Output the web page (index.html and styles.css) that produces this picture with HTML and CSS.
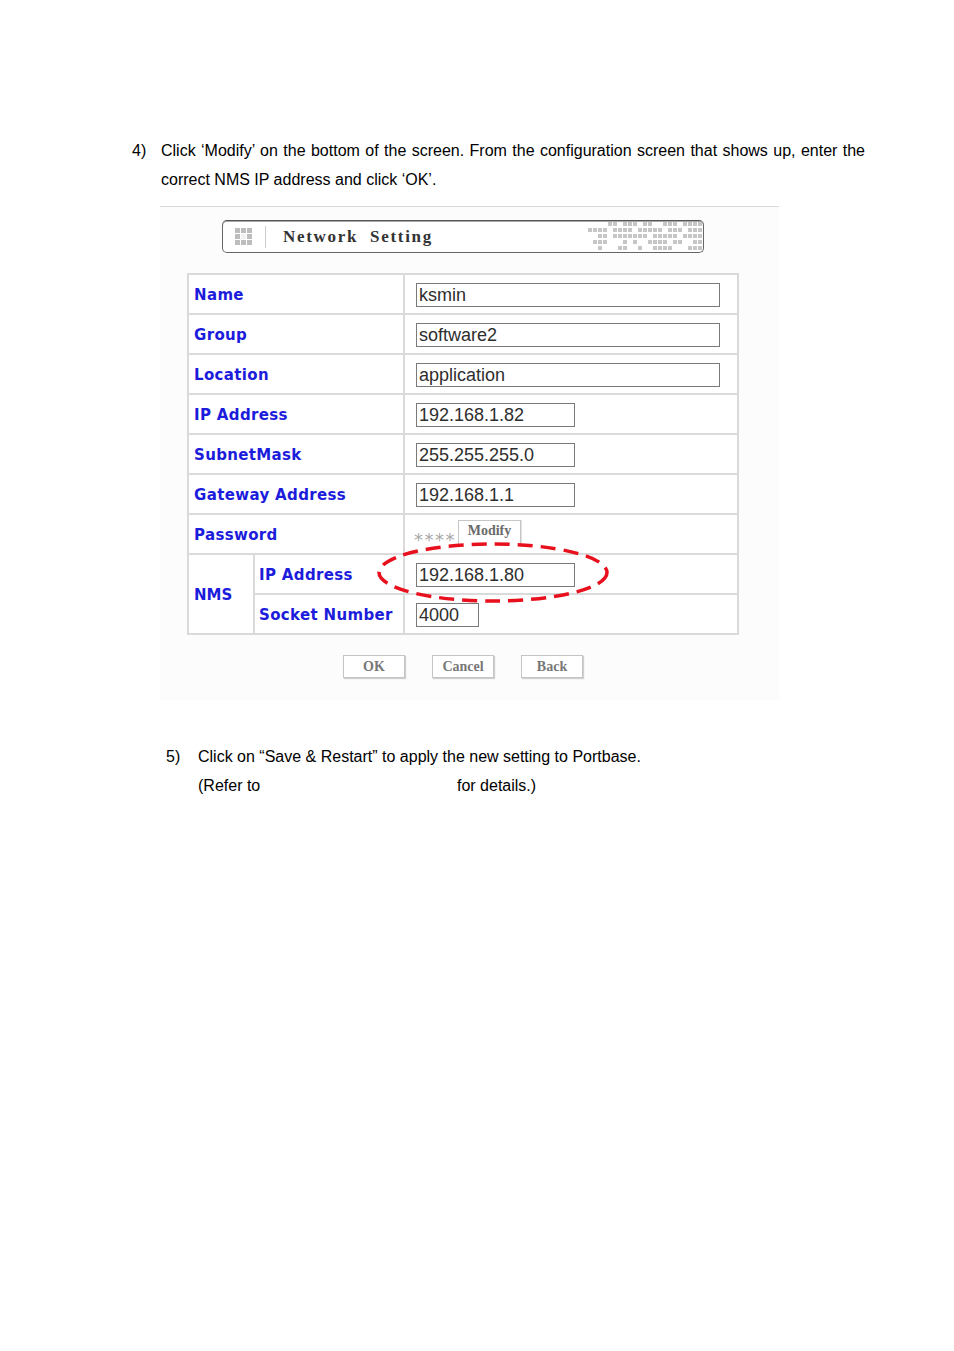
FILE: index.html
```html
<!DOCTYPE html>
<html lang="en">
<head>
<meta charset="utf-8">
<title>Network Setting</title>
<link rel="stylesheet" href="styles.css">
</head>
<body>
<div class="page">
  <div class="step step-4">
    <span class="num">4)</span>
    <p class="text">Click ‘Modify’ on the bottom of the screen. From the configuration screen that shows up, enter the correct NMS IP address and click ‘OK’.</p>
  </div>

  <div class="figure">
    <div class="titlebar">
      <svg class="grid-icon" width="17" height="17" viewBox="0 0 17 17">
        <g fill="#bdbdbd">
          <rect x="0" y="0" width="5" height="5"/><rect x="6" y="0" width="5" height="5"/><rect x="12" y="0" width="5" height="5"/>
          <rect x="0" y="6" width="5" height="5"/><rect x="12" y="6" width="5" height="5"/>
          <rect x="0" y="12" width="5" height="5"/><rect x="6" y="12" width="5" height="5"/><rect x="12" y="12" width="5" height="5"/>
        </g>
        <rect x="6" y="6" width="5" height="5" fill="#f1f1f1"/>
      </svg>
      <span class="sep"></span>
      <span class="title">Network&nbsp; Setting</span>
      <svg class="pixels" width="115" height="30" viewBox="0 0 115 30">
        <defs>
          <pattern id="px" width="5" height="6" patternUnits="userSpaceOnUse">
            <rect x="0" y="0" width="4" height="4" fill="#c6c6c6"/>
          </pattern>
        </defs>
        <g fill="url(#px)">
          <rect x="20" y="0" width="10" height="6"/><rect x="35" y="0" width="15" height="6"/><rect x="55" y="0" width="10" height="6"/><rect x="75" y="0" width="15" height="6"/><rect x="95" y="0" width="20" height="6"/>
          <rect x="0" y="6" width="20" height="6"/><rect x="25" y="6" width="20" height="6"/><rect x="50" y="6" width="25" height="6"/><rect x="80" y="6" width="15" height="6"/><rect x="100" y="6" width="15" height="6"/>
          <rect x="10" y="12" width="10" height="6"/><rect x="25" y="12" width="35" height="6"/><rect x="65" y="12" width="25" height="6"/><rect x="95" y="12" width="20" height="6"/>
          <rect x="5" y="18" width="15" height="6"/><rect x="35" y="18" width="5" height="6"/><rect x="45" y="18" width="5" height="6"/><rect x="60" y="18" width="20" height="6"/><rect x="85" y="18" width="10" height="6"/><rect x="105" y="18" width="10" height="6"/>
          <rect x="10" y="24" width="5" height="6"/><rect x="30" y="24" width="10" height="6"/><rect x="50" y="24" width="5" height="6"/><rect x="65" y="24" width="20" height="6"/><rect x="100" y="24" width="15" height="6"/>
        </g>
      </svg>
    </div>

    <div class="form-wrap">
      <div class="form-grid">
        <div class="cell label span2">Name</div>
        <div class="cell value"><span class="field w-long">ksmin</span></div>

        <div class="cell label span2">Group</div>
        <div class="cell value"><span class="field w-long">software2</span></div>

        <div class="cell label span2">Location</div>
        <div class="cell value"><span class="field w-long">application</span></div>

        <div class="cell label span2">IP Address</div>
        <div class="cell value"><span class="field w-mid">192.168.1.82</span></div>

        <div class="cell label span2">SubnetMask</div>
        <div class="cell value"><span class="field w-mid">255.255.255.0</span></div>

        <div class="cell label span2">Gateway Address</div>
        <div class="cell value"><span class="field w-mid">192.168.1.1</span></div>

        <div class="cell label span2">Password</div>
        <div class="cell value pw"><span class="stars">****</span><span class="btn-mini">Modify</span></div>

        <div class="cell label nms">NMS</div>
        <div class="cell label sub">IP Address</div>
        <div class="cell value"><span class="field w-mid">192.168.1.80</span></div>

        <div class="cell label sub">Socket Number</div>
        <div class="cell value"><span class="field w-short">4000</span></div>
      </div>
      <svg class="highlight" width="236" height="63" viewBox="0 0 236 63">
        <ellipse cx="118" cy="31.5" rx="114" ry="28.5" fill="none" stroke="#e8101c" stroke-width="3.5" stroke-dasharray="15 8"/>
      </svg>
    </div>

    <div class="actions">
      <span class="btn">OK</span>
      <span class="btn">Cancel</span>
      <span class="btn">Back</span>
    </div>
  </div>

  <div class="step step-5">
    <span class="num">5)</span>
    <p class="text">Click on “Save &amp; Restart” to apply the new setting to Portbase.<br><span class="refer">(Refer to</span>for details.)</p>
  </div>
</div>
</body>
</html>
```

FILE: styles.css
```css
html, body {
  margin: 0;
  padding: 0;
  background: #ffffff;
}

body {
  font-family: "Liberation Sans", Arial, sans-serif;
  color: #000000;
}

.page {
  width: 954px;
}

.step {
  display: flex;
}

.num {
  flex: none;
  font-size: 16px;
  line-height: 29px;
}

.text {
  margin: 0;
  font-size: 16px;
  line-height: 29px;
}

.step-4 {
  padding-top: 136px;
  padding-left: 132px;
}

.step-4 .num {
  width: 29px;
}

.step-4 .text {
  width: 704px;
  text-align: justify;
}

.step-5 {
  margin-top: 42px;
  padding-left: 166px;
}

.step-5 .num {
  width: 32px;
}

.refer {
  display: inline-block;
  width: 259px;
}

/* figure */
.figure {
  margin: 12px 0 0 160px;
  width: 619px;
  height: 494px;
  box-sizing: border-box;
  border-top: 1px solid #d9d9d9;
  background: #fcfcfc;
  padding-top: 13px;
}

.titlebar {
  margin-left: 62px;
  width: 482px;
  height: 33px;
  box-sizing: border-box;
  border: 1px solid #666666;
  border-top-color: #555555;
  border-radius: 5px;
  box-shadow: inset 0 1px 0 #a8a8a8;
  background: #ffffff;
  display: flex;
  align-items: center;
  padding-left: 12px;
}

.grid-icon {
  flex: none;
  display: block;
}

.sep {
  flex: none;
  width: 1px;
  height: 22px;
  margin-left: 13px;
  background: #cccccc;
}

.title {
  margin-left: 17px;
  font-family: "Liberation Serif", "Times New Roman", serif;
  font-weight: bold;
  font-size: 17px;
  letter-spacing: 1.7px;
  color: #333333;
}

.pixels {
  display: block;
  margin-left: auto;
  flex: none;
}

/* form table */
.form-wrap {
  position: relative;
  margin-top: 20px;
  margin-left: 27px;
  width: 552px;
}

.form-grid {
  display: grid;
  grid-template-columns: 64px 148px 332px;
  grid-auto-rows: 38px;
  gap: 2px;
  padding: 2px;
  background: #dadada;
}

.cell {
  background: #ffffff;
  display: flex;
  align-items: center;
  box-sizing: border-box;
  padding-top: 2px;
}

.label {
  font-family: "DejaVu Sans", Verdana, sans-serif;
  font-weight: bold;
  font-size: 15px;
  letter-spacing: 0.35px;
  color: #1c1cdc;
  padding-left: 5px;
}

.span2 {
  grid-column: span 2;
}

.nms {
  grid-row: span 2;
  letter-spacing: 0;
}

.sub {
  padding-left: 4px;
}

.value {
  padding-left: 11px;
}

.field {
  display: block;
  box-sizing: border-box;
  height: 24px;
  border: 1px solid #7a7a7a;
  background: #ffffff;
  padding-left: 2px;
  font-family: "Liberation Sans", Arial, sans-serif;
  font-size: 18px;
  line-height: 22px;
  color: #2e2e2e;
  white-space: nowrap;
}

.w-long { width: 304px; }
.w-mid { width: 159px; }
.w-short { width: 63px; }

.pw {
  align-items: flex-end;
  padding-left: 9px;
  padding-top: 0;
  padding-bottom: 9px;
}

.stars {
  display: block;
  width: 42px;
  font-family: "DejaVu Sans", sans-serif;
  font-size: 18px;
  line-height: 18px;
  letter-spacing: 1.5px;
  color: #a8a8a8;
  margin-bottom: -5px;
  white-space: nowrap;
}

.btn-mini {
  display: block;
  box-sizing: border-box;
  width: 63px;
  height: 24px;
  margin-left: 2px;
  border: 1px solid #c6c6c6;
  border-bottom: none;
  box-shadow: 1px 0 0 #e2e2e2;
  background: #ffffff;
  font-family: "Liberation Serif", "Times New Roman", serif;
  font-weight: bold;
  font-size: 14px;
  line-height: 20px;
  text-align: center;
  color: #6a6a6a;
}

.highlight {
  position: absolute;
  left: 188px;
  top: 268px;
  display: block;
}

/* buttons */
.actions {
  margin-top: 20px;
  margin-left: 27px;
  width: 552px;
  display: flex;
  justify-content: center;
  gap: 27px;
}

.btn {
  display: block;
  box-sizing: border-box;
  width: 62px;
  height: 23px;
  border: 1px solid #c4c4c4;
  box-shadow: 1px 1px 1px #d0d0d0;
  background: #ffffff;
  font-family: "Liberation Serif", "Times New Roman", serif;
  font-weight: bold;
  font-size: 14px;
  line-height: 21px;
  text-align: center;
  color: #777777;
}
```
